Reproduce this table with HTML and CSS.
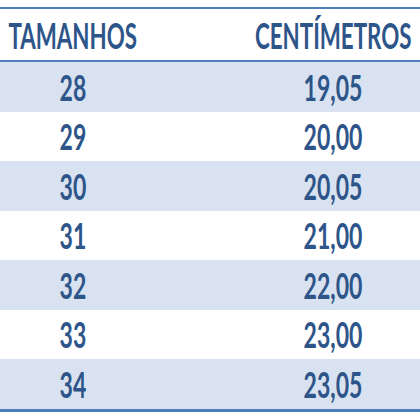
FILE: index.html
```html
<!DOCTYPE html>
<html>
<head>
<meta charset="utf-8">
<link rel="stylesheet" href="styles.css">
</head>
<body>
<div class="table">
  <div class="row head">
    <div class="cell c1"><span class="t">TAMANHOS</span></div>
    <div class="cell c2"></div>
    <div class="cell c3"><span class="t">CENTÍMETROS</span></div>
  </div>
  <div class="row band">
    <div class="cell c1"><span class="t">28</span></div><div class="cell c2"></div><div class="cell c3"><span class="t">19,05</span></div>
  </div>
  <div class="row">
    <div class="cell c1"><span class="t">29</span></div><div class="cell c2"></div><div class="cell c3"><span class="t">20,00</span></div>
  </div>
  <div class="row band">
    <div class="cell c1"><span class="t">30</span></div><div class="cell c2"></div><div class="cell c3"><span class="t">20,05</span></div>
  </div>
  <div class="row">
    <div class="cell c1"><span class="t">31</span></div><div class="cell c2"></div><div class="cell c3"><span class="t">21,00</span></div>
  </div>
  <div class="row band">
    <div class="cell c1"><span class="t">32</span></div><div class="cell c2"></div><div class="cell c3"><span class="t">22,00</span></div>
  </div>
  <div class="row">
    <div class="cell c1"><span class="t">33</span></div><div class="cell c2"></div><div class="cell c3"><span class="t">23,00</span></div>
  </div>
  <div class="row band last">
    <div class="cell c1"><span class="t">34</span></div><div class="cell c2"></div><div class="cell c3"><span class="t">23,05</span></div>
  </div>
</div>
</body>
</html>
```
FILE: styles.css
```css
html, body {
  margin: 0;
  padding: 0;
  background: #ffffff;
}
body {
  width: 420px;
  height: 420px;
  overflow: hidden;
  font-family: "Lato", "Liberation Sans", sans-serif;
  font-weight: 700;
  color: #2e5589;
}
.table {
  margin-top: 7px;
  border-top: 2px solid #4f7fbb;
  border-bottom: 3px solid #4f7fbb;
}
.row {
  display: grid;
  grid-template-columns: 146px 100px 174px;
  height: 49.5px;
  align-items: center;
}
.row.head {
  height: 51px;
  border-bottom: 2px solid #4f7fbb;
}
.row.band {
  background: #d8e2f0;
}
.cell {
  display: flex;
  justify-content: center;
  font-size: 36px;
  line-height: 1;
  min-width: 0;
}
.t {
  display: inline-block;
  flex: none;
  transform: scaleX(0.64);
  transform-origin: center;
  white-space: nowrap;
}
.head .t {
  transform: scaleX(0.62);
}
```
